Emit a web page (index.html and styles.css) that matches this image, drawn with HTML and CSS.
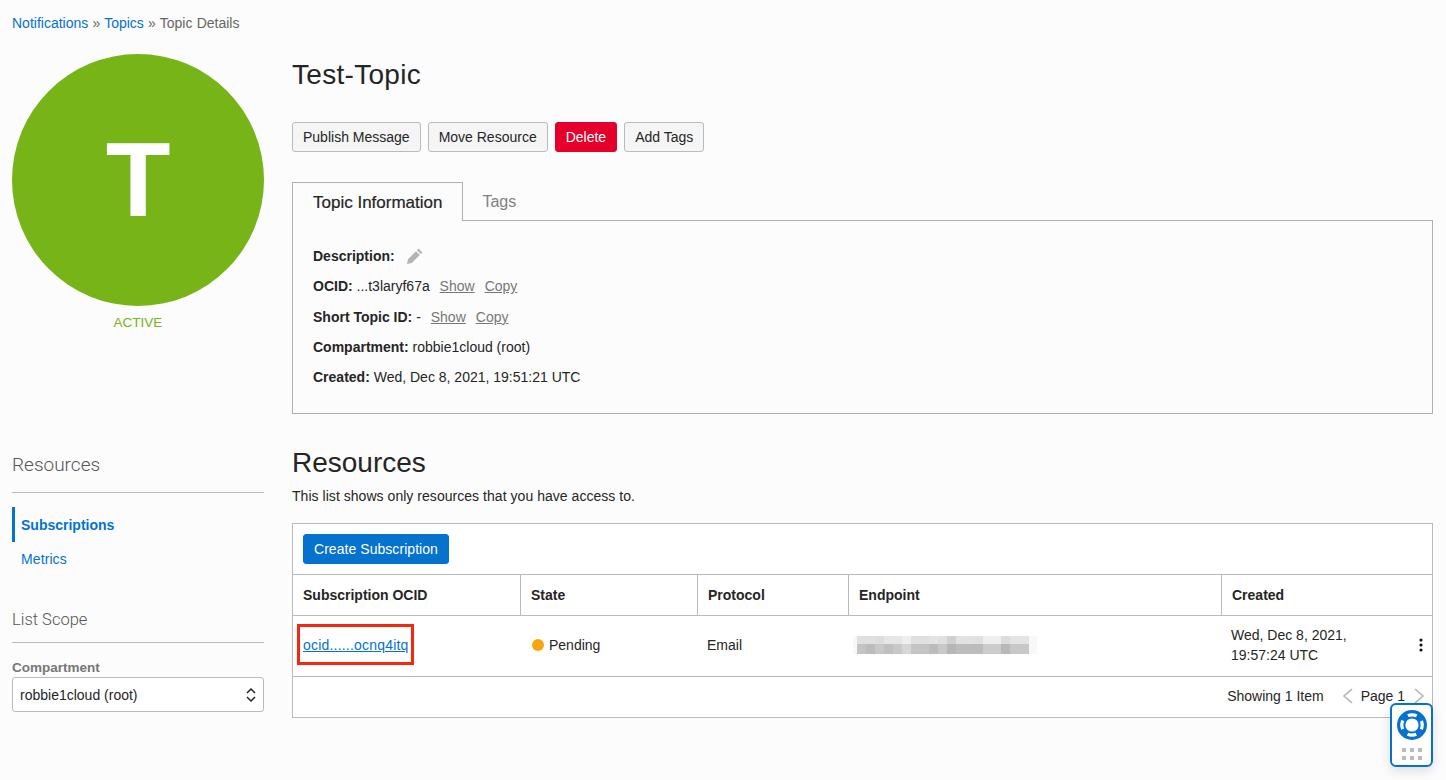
FILE: index.html
```html
<!DOCTYPE html>
<html lang="en">
<head>
    <meta charset="UTF-8">
    <title>Topic Details</title>
    <link rel="stylesheet" href="styles.css">
</head>
<body>
    <nav class="breadcrumb">
        <a href="#">Notifications</a> » <a href="#">Topics</a> » Topic Details
    </nav>

    <div class="top-row">
        <aside class="avatar-col">
            <div class="avatar">T</div>
            <div class="avatar-state">ACTIVE</div>
        </aside>
        <section class="topic">
            <h1 class="topic-title">Test-Topic</h1>
            <div class="actions">
                <button class="btn">Publish Message</button>
                <button class="btn">Move Resource</button>
                <button class="btn btn-danger">Delete</button>
                <button class="btn">Add Tags</button>
            </div>
            <div class="tabs">
                <div class="tab tab-active">Topic Information</div>
                <div class="tab">Tags</div>
            </div>
            <div class="info-panel">
                <div class="info-line">
                    <b>Description:</b>
                    <svg class="pencil" width="16" height="16" viewBox="0 0 16 16"><path d="M11.6 .6l3.8 3.8-1.7 1.7-3.8-3.8zM9 3.2l3.8 3.8-8 8L0 16l1-4.8z" fill="#b4b4b4"/></svg>
                </div>
                <div class="info-line"><b>OCID:</b> ...t3laryf67a <a class="link-muted" href="#">Show</a> <a class="link-muted" href="#">Copy</a></div>
                <div class="info-line"><b>Short Topic ID:</b> - <a class="link-muted" href="#">Show</a> <a class="link-muted" href="#">Copy</a></div>
                <div class="info-line"><b>Compartment:</b> robbie1cloud (root)</div>
                <div class="info-line"><b>Created:</b> Wed, Dec 8, 2021, 19:51:21 UTC</div>
            </div>
        </section>
    </div>

    <div class="bottom-row">
        <aside class="side">
            <h3 class="side-title">Resources</h3>
            <ul class="side-menu">
                <li class="side-item side-item-active"><a href="#">Subscriptions</a></li>
                <li class="side-item"><a href="#">Metrics</a></li>
            </ul>
            <h3 class="side-title scope-title">List Scope</h3>
            <label class="field-label">Compartment</label>
            <div class="select">
                <span>robbie1cloud (root)</span>
                <svg width="12" height="16" viewBox="0 0 12 16" fill="none" stroke="#222" stroke-width="1.5"><path d="M2 6l4-4 4 4M2 10l4 4 4-4"/></svg>
            </div>
        </aside>

        <section class="resources">
            <h2 class="resources-title">Resources</h2>
            <p class="resources-note">This list shows only resources that you have access to.</p>
            <div class="table-box">
                <div class="toolbar"><button class="btn btn-primary">Create Subscription</button></div>
                <div class="table-row table-head">
                    <div class="cell">Subscription OCID</div>
                    <div class="cell">State</div>
                    <div class="cell">Protocol</div>
                    <div class="cell">Endpoint</div>
                    <div class="cell">Created</div>
                </div>
                <div class="table-row table-body">
                    <div class="cell"><a class="ocid" href="#">ocid......ocnq4itq</a></div>
                    <div class="cell"><span class="dot"></span>Pending</div>
                    <div class="cell">Email</div>
                    <div class="cell"><div class="blurred"></div></div>
                    <div class="cell cell-created">
                        <span>Wed, Dec 8, 2021,<br>19:57:24 UTC</span>
                        <svg width="4" height="14" viewBox="0 0 4 14" fill="#161513"><circle cx="2" cy="2" r="1.6"/><circle cx="2" cy="7" r="1.6"/><circle cx="2" cy="12" r="1.6"/></svg>
                    </div>
                </div>
                <div class="pager">
                    <span>Showing 1 Item</span>
                    <svg class="pager-prev" width="11" height="16" viewBox="0 0 11 16" fill="none" stroke="#b4b4b4" stroke-width="1.6"><path d="M10 1L2 8l8 7"/></svg>
                    <span>Page 1</span>
                    <svg class="pager-next" width="11" height="16" viewBox="0 0 11 16" fill="none" stroke="#b4b4b4" stroke-width="1.6"><path d="M1 1l8 7-8 7"/></svg>
                </div>
            </div>
        </section>
    </div>

    <!-- help widget, floats over the page -->
    <div class="help">
        <svg width="30" height="30" viewBox="0 0 30 30">
            <circle cx="15" cy="15" r="15" fill="#0572ce"/>
            <circle cx="15" cy="15" r="10.2" fill="none" stroke="#fff" stroke-width="3.2" stroke-dasharray="9 7.02" stroke-dashoffset="4.5"/>
            <circle cx="15" cy="15" r="6.6" fill="#fff"/>
        </svg>
        <div class="help-dots">
            <i></i><i></i><i></i><i></i><i></i><i></i>
        </div>
    </div>
</body>
</html>
```

FILE: styles.css
```css
* {
    box-sizing: border-box;
}

body {
    background-color: #fcfcfc;
    margin: 0;
    padding: 0 13px 0 12px;
    height: 780px;
    overflow: hidden;
    font-family: "Liberation Sans", Arial, sans-serif;
    font-size: 14px;
    color: #252525;
}

a {
    color: #0572ce;
    text-decoration: none;
}

.breadcrumb {
    padding-top: 15px;
    height: 54px;
    line-height: 16px;
    color: #666;
    word-spacing: 0.3px;
}

.top-row, .bottom-row {
    display: grid;
    grid-template-columns: 252px 1141px;
    column-gap: 28px;
}

.top-row {
    height: 377px;
}

/* Left avatar */
.avatar {
    width: 252px;
    height: 252px;
    border-radius: 50%;
    background-color: #76b417;
    color: #fff;
    font-size: 106px;
    font-weight: bold;
    line-height: 250px;
    text-align: center;
}

.avatar-state {
    margin-top: 9px;
    text-align: center;
    font-size: 13.5px;
    color: #76b417;
    line-height: 16px;
}

.topic-title {
    margin: 0;
    height: 68px;
    padding-top: 3px;
    font-size: 28px;
    font-weight: normal;
    line-height: 36px;
    letter-spacing: 0.3px;
}

.actions {
    display: flex;
    gap: 7px;
}

.btn {
    height: 30px;
    padding: 0 10px;
    border: 1px solid #b8bbc0;
    border-radius: 3px;
    background-color: #f5f5f5;
    color: #252525;
    font-family: inherit;
    font-size: 14px;
}

.btn-danger {
    border-color: #e4002b;
    background-color: #e4002b;
    color: #fff;
}

.btn-primary {
    letter-spacing: 0.05px;
    border-color: #0572ce;
    background-color: #0572ce;
    color: #fff;
}

/* Tabs */
.tabs {
    display: flex;
    margin-top: 30px;
    height: 39px;
}

.tab {
    padding: 0 19px;
    font-size: 16px;
    line-height: 39px;
    color: #808080;
}

.tab-active {
    position: relative;
    z-index: 1;
    height: 39px;
    padding: 0 20px;
    border: 1px solid #aeb0b3;
    border-bottom: none;
    background-color: #fcfcfc;
    color: #252525;
    font-size: 17px;
    -webkit-text-stroke: 0.2px #252525;
}

.info-panel {
    height: 194px;
    margin-top: -1px;
    padding: 20px 20px 0;
    border: 1px solid #aeb0b3;
}

.info-line {
    display: flex;
    align-items: center;
    height: 30.3px;
    white-space: pre;
}

.pencil {
    margin-left: 12px;
}

.link-muted {
    color: #777;
    text-decoration: underline;
    margin-left: 6px;
}

.link-muted + .link-muted {
    margin-left: 10px;
}

/* Left menu */
.side {
    padding-top: 22px;
}

.side-title {
    margin: 0;
    padding-bottom: 15px;
    border-bottom: 1px solid #b8bbc0;
    font-family: Roboto, "Liberation Sans", sans-serif;
    font-size: 19px;
    font-weight: 300;
    line-height: 24px;
    color: #555;
}

.side-menu {
    list-style: none;
    margin: 14px 0 0;
    padding: 0;
}

.side-item {
    height: 35px;
    margin-bottom: -1px;
    padding-left: 9px;
    line-height: 37px;
    letter-spacing: 0.1px;
}

.side-item-active {
    border-left: 3px solid #0572ce;
    padding-left: 6px;
    font-weight: bold;
    letter-spacing: 0;
}

.scope-title {
    margin-top: 33px;
    padding-bottom: 10px;
    font-size: 16.5px;
}

.field-label {
    display: block;
    margin-top: 17px;
    font-size: 13.5px;
    font-weight: bold;
    color: #777;
    line-height: 16px;
}

.select {
    display: flex;
    justify-content: space-between;
    align-items: center;
    height: 35px;
    margin-top: 1px;
    padding: 0 6px 0 7px;
    border: 1px solid #b8bbc0;
    border-radius: 3px;
    background-color: #fff;
}

/* Resources list */
.resources-title {
    margin: 0;
    padding-top: 14px;
    font-size: 28px;
    font-weight: normal;
    line-height: 36px;
}

.resources-note {
    margin: 6px 0 18px;
    line-height: 18px;
    letter-spacing: 0.04px;
}

.table-box {
    height: 195px;
    border: 1px solid #b8bbc0;
    background-color: #fff;
}

.toolbar {
    height: 51px;
    padding-top: 10px;
    border-bottom: 1px solid #b8bbc0;
}

.toolbar .btn {
    margin-left: 10px;
}

.table-row {
    display: grid;
    grid-template-columns: 227px 177px 151px 373px 1fr;
    border-bottom: 1px solid #b8bbc0;
}

.table-head {
    height: 41px;
    font-weight: bold;
}

.table-body {
    height: 61px;
}

.cell {
    display: flex;
    align-items: center;
    padding: 0 10px;
    border-left: 1px solid #b8bbc0;
    line-height: 20px;
}

.cell:first-child {
    border-left: none;
}

.table-body .cell {
    border-left: none;
    padding-bottom: 2px;
}

.cell-created {
    justify-content: space-between;
    padding-right: 9px;
}

.ocid {
    position: relative;
    text-decoration: underline;
    letter-spacing: 0.2px;
}

/* red highlight drawn over the screenshot */
.ocid::after {
    content: "";
    position: absolute;
    left: -6px;
    right: -5px;
    top: -11px;
    bottom: -10px;
    border: 3px solid #f5280f;
}

.dot {
    width: 12px;
    height: 12px;
    margin: 0 5px 0 2px;
    border-radius: 50%;
    background-color: #f5a70a;
}

/* pixelated endpoint, 9px cells in two rows */
.blurred {
    width: 184px;
    height: 18px;
    margin-left: -5px;
    background-repeat: no-repeat;
    background-size: 100% 8px, 100% 10px;
    background-position: 0 0, 0 8px;
    background-image:
        linear-gradient(90deg, #f8f8f8 4px, #e0e0e0 4px 13px, #e0e0e0 13px 22px, #dddddd 22px 31px, #e6e6e6 31px 49px, #eef0ef 49px 58px, #e0e0e0 58px 76px, #e4e4e4 76px 85px, #e0e0e0 85px 94px, #d0d0d0 94px 103px, #e2e2e2 103px 121px, #e0e0e0 121px 130px, #eeeeee 130px 148px, #dcdcdc 148px 157px, #e4e4e4 157px 176px, #f8f8f8 176px),
        linear-gradient(90deg, #f8f8f8 4px, #c4c4c4 4px 13px, #bcbcbc 13px 22px, #c8c8c8 22px 31px, #c0c0c0 31px 40px, #c8c8c8 40px 49px, #d6d6d6 49px 58px, #c4c4c4 58px 76px, #bcbcbc 76px 85px, #c8c8c8 85px 94px, #b6b6b6 94px 103px, #bcbcbc 103px 130px, #cccccc 130px 148px, #b8b8b8 148px 157px, #c8c8c8 157px 176px, #f8f8f8 176px);
}

.pager {
    display: flex;
    justify-content: flex-end;
    align-items: center;
    height: 41px;
    padding: 0 7px 4px 0;
}

.pager-prev {
    margin: 0 8px 0 18px;
}

.pager-next {
    margin-left: 9px;
}

/* Help */
.help {
    position: fixed;
    left: 1390px;
    top: 703px;
    width: 43px;
    height: 64px;
    padding-top: 5px;
    border: 2px solid #0572ce;
    border-radius: 6px;
    background-color: #fff;
    box-shadow: 0 4px 12px rgba(0, 0, 0, 0.12);
    text-align: center;
}

.help-dots {
    display: grid;
    grid-template-columns: repeat(3, 4px);
    gap: 4px;
    justify-content: center;
    margin-top: 5px;
}

.help-dots i {
    height: 4px;
    background-color: #b8bbc0;
}
```
